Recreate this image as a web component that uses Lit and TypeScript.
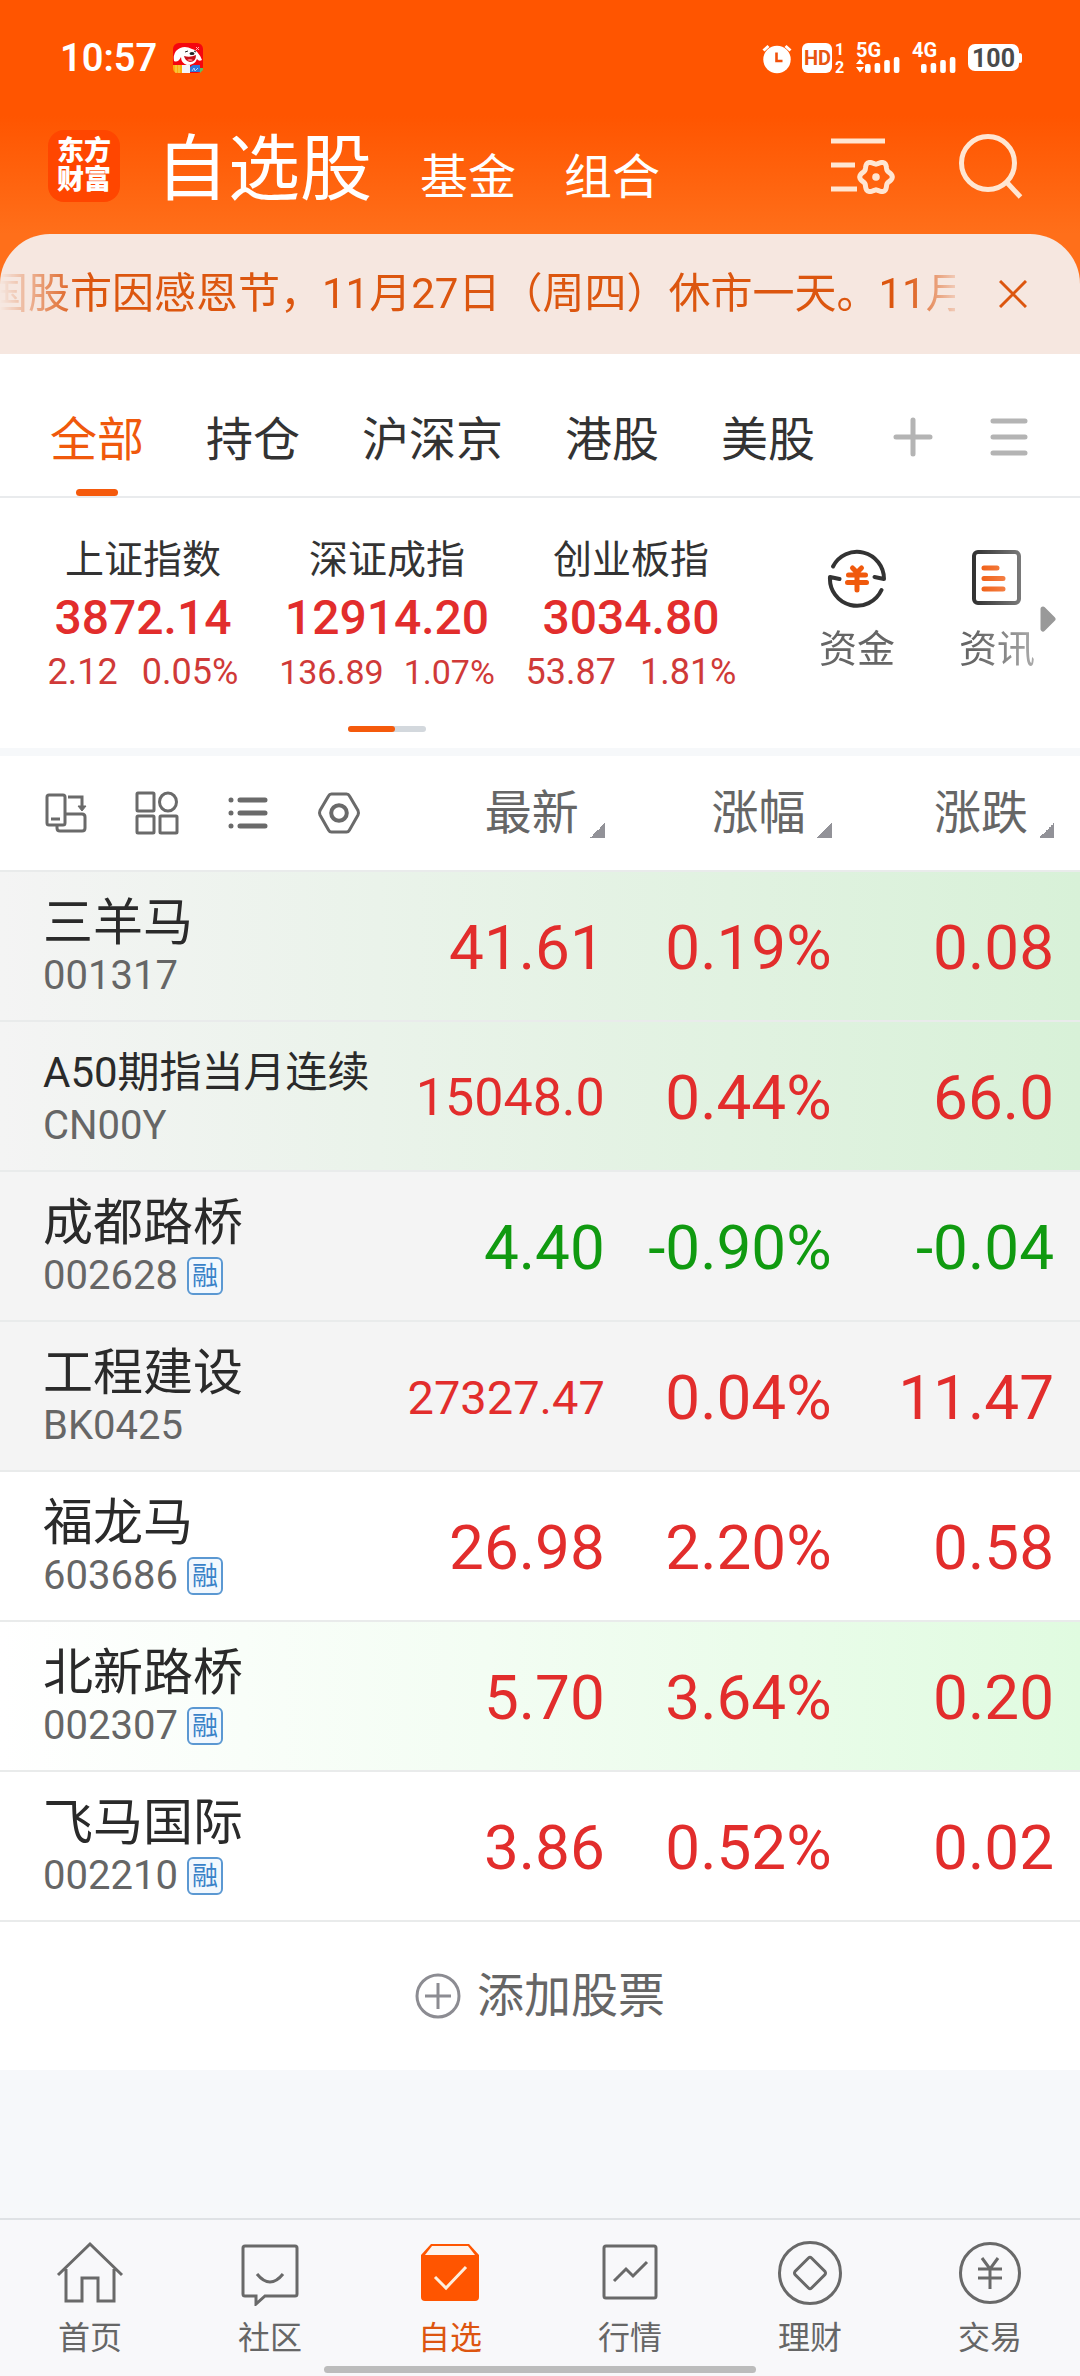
import { LitElement, html, svg, css, nothing } from "lit";
import { customElement, property, state } from "lit/decorators.js";
import { classMap } from "lit/directives/class-map.js";

type Tone = "up" | "down";
type Shade = "plain" | "grey" | "grey-flash" | "flash";

interface Stock {
  name: string;
  code: string;
  margin: boolean;
  price: string;
  percent: string;
  change: string;
  tone: Tone;
  shade: Shade;
}

const STOCKS: Stock[] = [
  { name: "三羊马", code: "001317", margin: false, price: "41.61", percent: "0.19%", change: "0.08", tone: "up", shade: "grey-flash" },
  { name: "A50期指当月连续", code: "CN00Y", margin: false, price: "15048.0", percent: "0.44%", change: "66.0", tone: "up", shade: "grey-flash" },
  { name: "成都路桥", code: "002628", margin: true, price: "4.40", percent: "-0.90%", change: "-0.04", tone: "down", shade: "grey" },
  { name: "工程建设", code: "BK0425", margin: false, price: "27327.47", percent: "0.04%", change: "11.47", tone: "up", shade: "grey" },
  { name: "福龙马", code: "603686", margin: true, price: "26.98", percent: "2.20%", change: "0.58", tone: "up", shade: "plain" },
  { name: "北新路桥", code: "002307", margin: true, price: "5.70", percent: "3.64%", change: "0.20", tone: "up", shade: "flash" },
  { name: "飞马国际", code: "002210", margin: true, price: "3.86", percent: "0.52%", change: "0.02", tone: "up", shade: "plain" },
];

const INDICES = [
  { name: "上证指数", value: "3872.14", change: "2.12", percent: "0.05%" },
  { name: "深证成指", value: "12914.20", change: "136.89", percent: "1.07%" },
  { name: "创业板指", value: "3034.80", change: "53.87", percent: "1.81%" },
];

/* Outline of a gear with six soft lobes. */
const gearPath = (cx: number, cy: number, radius: number, lobe: number): string => {
  const points: string[] = [];
  for (let i = 0; i < 72; i++) {
    const a = (i / 72) * Math.PI * 2;
    const r = radius + lobe * Math.cos(6 * a);
    points.push(`${(cx + r * Math.cos(a)).toFixed(2)} ${(cy + r * Math.sin(a)).toFixed(2)}`);
  }
  return `M${points.join("L")}Z`;
};

const signalBars = (tops: number[]) =>
  tops.map((top, i) => svg`<rect x=${9 + i * 9.6} y=${top} width="5.6" height=${31 - top} rx="2"></rect>`);

@customElement("status-bar")
export class StatusBar extends LitElement {
  static styles = css`
    :host {
      display: flex;
      align-items: center;
      height: 116px;
      padding: 0 58px 0 60px;
      color: #fff;
      font-family: Roboto, "Noto Sans", sans-serif;
    }
    .time {
      font-size: 38px;
      line-height: 48px;
      font-weight: 600;
      margin-right: 16px;
    }
    .tray {
      display: flex;
      align-items: center;
      gap: 10px;
      margin-left: auto;
    }
    svg {
      display: block;
      overflow: visible;
      fill: #fff;
    }
    text {
      font-weight: 700;
    }
    .s15 {
      font-size: 16px;
    }
    .s20 {
      font-size: 20px;
    }
    .s25 {
      font-size: 25px;
    }
    .dark {
      fill: #4a4a4a;
    }
    .orange {
      fill: #e85510;
    }
  `;

  render() {
    return html`
      <span class="time">10:57</span>
      <svg width="30" height="30" viewBox="0 0 30 30" aria-hidden="true">
        <rect width="30" height="30" rx="6" fill="#f5050f"></rect>
        <path d="M3 8Q10 1 19 6Q25 7 29 17Q26 19 24 16Q22 22 14 22Q8 20 8 14Q5 20 1 18Q0 12 3 8Z"></path>
        <path d="M11 13Q17 15 23 12Q23 19 17 19Q12 18 11 13Z" fill="#c81018"></path>
        <path d="M14 17Q17 15 20 17Q18 19 14 17Z" fill="#ff7a80"></path>
        <ellipse cx="19" cy="10.500" rx="2.500" ry="1.500" fill="#222"></ellipse>
        <path d="M12 9l3-1M21 8l2 1" stroke="#222" stroke-width="1"></path>
        <path d="M0 22H9V30H5Q0 30 0 25Z" fill="#f8b010"></path>
        <path d="M3 22v8M6 22v8" stroke="#fbd560" stroke-width="1"></path>
        <rect x="9" y="22" width="8" height="8" fill="#f4f4fa"></rect>
        <path d="M17 24L20 22H27V29H17Z" fill="#2f78d8"></path>
        <path d="M19 28l2-3 1 3 3-3" stroke="#a8d0ff" stroke-width="1" fill="none"></path>
        <path d="M27 25h3v2l-3 3Z" fill="#5fc060"></path>
        <path d="M23 4l3 3M26 4l-3 3" stroke="#ffb0b0" stroke-width="1"></path>
      </svg>
      <div class="tray">
        <svg width="30" height="32" viewBox="0 0 30 32" role="img" aria-label="闹钟">
          <circle cx="15" cy="17.500" r="13.700"></circle>
          <path d="M1.500 8.500L6.500 4M28.500 8.500L23.500 4" stroke="#fff" stroke-width="3"></path>
          <path d="M14.500 10.500V19H20.500" stroke="#f2500a" stroke-width="2.600" fill="none"></path>
        </svg>
        <svg width="44" height="32" viewBox="0 0 44 32">
          <rect y="1" width="30" height="30" rx="6"></rect>
          <text class="s20 orange" x="2" y="23">HD</text>
          <text class="s15" x="33" y="13">1</text>
          <text class="s15" x="33" y="31">2</text>
        </svg>
        <svg width="46" height="32" viewBox="0 0 46 32">
          <text class="s20" x="0" y="15">5G</text>
          <path d="M0 22H8L4 17ZM0 25H8L4 30.500Z"></path>
          ${signalBars([22, 21, 18, 15])}
        </svg>
        <svg width="46" height="32" viewBox="0 0 46 32">
          <text class="s20" x="0" y="15">4G</text>
          ${signalBars([22, 21, 18, 15])}
        </svg>
        <svg width="54" height="28" viewBox="0 0 54 28">
          <rect width="51" height="27" rx="7"></rect>
          <rect x="50" y="9" width="4" height="10" rx="2"></rect>
          <text class="s25 dark" x="4" y="23">100</text>
        </svg>
      </div>
    `;
  }
}

@customElement("app-header")
export class AppHeader extends LitElement {
  static styles = css`
    :host {
      display: block;
      color: #fff;
    }
    .bar {
      display: flex;
      align-items: center;
      height: 100px;
      padding: 0 57px 18px 48px;
    }
    .logo {
      display: grid;
      place-content: center;
      width: 72px;
      height: 72px;
      border-radius: 16px;
      background: #ff4600;
      font-size: 27px;
      line-height: 29px;
      font-weight: 800;
      text-align: center;
    }
    .sections {
      display: flex;
      align-items: baseline;
      gap: 48px;
      margin-left: 36px;
      padding-top: 16px;
    }
    .tools {
      display: flex;
      align-items: center;
      gap: 64px;
      margin-left: auto;
    }
    button {
      all: unset;
      display: block;
      cursor: pointer;
      font-size: 48px;
      line-height: 72px;
    }
    .current {
      font-size: 72px;
      line-height: 72px;
    }
    svg {
      display: block;
      fill: none;
      stroke: #ffe6d2;
      stroke-width: 5px;
    }
    .dot {
      fill: #ffe6d2;
      stroke: none;
    }
  `;

  render() {
    return html`
      <status-bar></status-bar>
      <div class="bar">
        <div class="logo"><span>东方</span><span>财富</span></div>
        <nav class="sections">
          <button class="current" aria-current="page">自选股</button>
          <button>基金</button>
          <button>组合</button>
        </nav>
        <div class="tools">
          <button aria-label="自选设置">
            <svg width="64" height="58" viewBox="0 0 64 58">
              <path d="M0 4H54M0 28H24M0 52H26"></path>
              <path d=${gearPath(45, 40, 14.6, 1.7)}></path>
              <circle class="dot" cx="45" cy="40" r="3.800"></circle>
            </svg>
          </button>
          <button aria-label="搜索">
            <svg width="64" height="66" viewBox="0 0 64 66">
              <circle cx="29" cy="30" r="26.500"></circle>
              <path d="M47.500 49L61.500 64"></path>
            </svg>
          </button>
        </div>
      </div>
    `;
  }
}

@customElement("notice-bar")
export class NoticeBar extends LitElement {
  static styles = css`
    :host {
      display: flex;
      align-items: center;
      height: 120px;
      padding-right: 53px;
      border-radius: 50px 50px 0 0;
      background: #f6e7e0;
      color: #dc560f;
    }
    .marquee {
      flex: 1;
      display: flex;
      overflow: hidden;
      white-space: nowrap;
      font-size: 42px;
      line-height: 60px;
      -webkit-mask-image: linear-gradient(to right, transparent, #000 80px, #000 calc(100% - 50px), rgba(0, 0, 0, 0.2));
      mask-image: linear-gradient(to right, transparent, #000 80px, #000 calc(100% - 50px), rgba(0, 0, 0, 0.2));
    }
    .message {
      margin-left: -14px;
    }
    button {
      all: unset;
      display: block;
      cursor: pointer;
      margin-left: 44px;
    }
    svg {
      display: block;
      stroke: #dc560f;
      stroke-width: 3px;
    }
  `;

  render() {
    return html`
      <div class="marquee">
        <span class="message">国股市因感恩节，11月27日（周四）休市一天。11月</span>
      </div>
      <button aria-label="关闭公告">
        <svg width="28" height="28" viewBox="0 0 28 28"><path d="M1 1L27 27M27 1L1 27"></path></svg>
      </button>
    `;
  }
}

@customElement("group-tabs")
export class GroupTabs extends LitElement {
  @state() private selected = "全部";

  static styles = css`
    :host {
      display: flex;
      align-items: stretch;
      height: 144px;
      padding: 0 52px 0 50px;
      background: #fff;
      border-bottom: 2px solid #e9ebed;
      color: #333;
      box-sizing: border-box;
    }
    .tabs {
      display: flex;
      gap: 62px;
    }
    button {
      all: unset;
      display: flex;
      flex-direction: column;
      align-items: center;
      cursor: pointer;
      font-size: 47px;
      line-height: 60px;
    }
    .tab {
      justify-content: space-between;
      padding-top: 56px;
    }
    .tab::after {
      content: "";
      width: 42px;
      height: 7px;
      border-radius: 4px;
    }
    .selected {
      color: #f0590c;
    }
    .selected::after {
      background: #f55a0c;
    }
    .tools {
      display: flex;
      align-items: center;
      gap: 57px;
      margin-left: auto;
      padding-top: 24px;
    }
    svg {
      display: block;
      stroke: #b4b4b4;
      stroke-width: 5px;
      stroke-linecap: round;
    }
  `;

  render() {
    return html`
      <div class="tabs" role="tablist">
        ${["全部", "持仓", "沪深京", "港股", "美股"].map(
          (label) => html`<button
            role="tab"
            aria-selected=${label === this.selected}
            class=${classMap({ tab: true, selected: label === this.selected })}
            @click=${() => (this.selected = label)}
          >${label}</button>`
        )}
      </div>
      <div class="tools">
        <button aria-label="新增分组">
          <svg width="40" height="40" viewBox="0 0 40 40"><path d="M3 20H37M20 3V37"></path></svg>
        </button>
        <button aria-label="分组管理">
          <svg width="38" height="40" viewBox="0 0 38 40"><path d="M3 4H35M3 20H35M3 36H35"></path></svg>
        </button>
      </div>
    `;
  }
}

@customElement("index-strip")
export class IndexStrip extends LitElement {
  static styles = css`
    :host {
      display: flex;
      flex-direction: column;
      background: #fff;
    }
    .content {
      display: flex;
      align-items: flex-start;
      padding: 34px 24px 0 21px;
    }
    .main {
      flex: 3;
    }
    .indices {
      display: grid;
      grid-template-columns: repeat(3, 1fr);
    }
    .index {
      display: flex;
      flex-direction: column;
      align-items: center;
      white-space: nowrap;
      color: #e22d2c;
    }
    .name {
      color: #333;
      font-size: 39px;
      line-height: 56px;
    }
    .value {
      font-size: 48px;
      line-height: 60px;
      font-weight: 500;
    }
    .moves {
      display: flex;
      gap: 24px;
      font-size: 36px;
      line-height: 48px;
      color: #d03a38;
    }
    .compact {
      gap: 20px;
      font-size: 34px;
    }
    .links {
      display: flex;
      align-items: center;
      justify-content: flex-end;
      width: 303px;
    }
    .faded {
      display: flex;
      gap: 64px;
      padding-top: 16px;
      -webkit-mask-image: linear-gradient(to right, #000 72%, rgba(0, 0, 0, 0.55));
      mask-image: linear-gradient(to right, #000 72%, rgba(0, 0, 0, 0.55));
    }
    button {
      all: unset;
      display: flex;
      flex-direction: column;
      align-items: center;
      gap: 13px;
      cursor: pointer;
      color: #666;
      font-size: 38px;
      line-height: 56px;
    }
    .next {
      margin: 28px 0 0 5px;
    }
    .pager {
      display: flex;
      width: 78px;
      height: 6px;
      margin: 30px auto 16px;
      border-radius: 3px;
      background: #d3d8dd;
    }
    .thumb {
      width: 47px;
      border-radius: 3px;
      background: #f55a0c;
    }
    svg {
      display: block;
    }
    .ink {
      fill: none;
      stroke: #333;
      stroke-width: 4px;
      stroke-linecap: round;
      stroke-linejoin: round;
    }
    .accent {
      fill: none;
      stroke: #f0590c;
      stroke-width: 4px;
      stroke-linecap: round;
    }
    .bold {
      stroke-width: 5px;
    }
  `;

  render() {
    return html`
      <div class="content">
        <div class="main">
          <div class="indices">
            ${INDICES.map(
              (item) => html`<div class="index">
                <span class="name">${item.name}</span>
                <span class="value">${item.value}</span>
                <span class=${classMap({ moves: true, compact: item.change.length > 5 })}>
                  <span>${item.change}</span><span>${item.percent}</span>
                </span>
              </div>`
            )}
          </div>
          <div class="pager"><span class="thumb"></span></div>
        </div>
        <div class="links">
          <div class="faded">
            <button>
              <svg width="60" height="60" viewBox="0 0 60 60">
                <path class="ink" d="M6 18.500A27 27 0 0 1 57 31L47.500 29"></path>
                <path class="ink" d="M54.500 42A27 27 0 0 1 3 29L12.500 31"></path>
                <path class="accent bold" d="M25.500 20L30 24.500L34.500 20M21.500 27H38.500M20.500 34.500H39.500M30 25V42"></path>
              </svg>
              资金
            </button>
            <button>
              <svg width="60" height="60" viewBox="0 0 60 60">
                <rect class="ink" x="7" y="4" width="45" height="51" rx="4"></rect>
                <path class="accent bold" d="M17 20H30M17 30.500H36M17 41H36"></path>
              </svg>
              资讯
            </button>
          </div>
          <svg class="next" width="16" height="26" viewBox="0 0 16 26">
            <path d="M3 3L13 13L3 23Z" fill="#999" stroke="#999" stroke-width="5" stroke-linejoin="round"></path>
          </svg>
        </div>
      </div>
    `;
  }
}

@customElement("stock-table")
export class StockTable extends LitElement {
  @property({ attribute: false }) stocks: Stock[] = [];

  static styles = css`
    :host {
      display: block;
      background: #fff;
    }
    table {
      width: 100%;
      border-collapse: collapse;
      table-layout: fixed;
    }
    .c-name {
      width: 36%;
    }
    .c-percent {
      width: 21%;
    }
    .c-change {
      width: 23%;
    }
    th,
    td {
      box-sizing: border-box;
      padding: 0;
      font-weight: 400;
      text-align: right;
      white-space: nowrap;
    }
    .head {
      height: 114px;
    }
    .row {
      height: 150px;
      box-shadow: inset 0 2px 0 #e9ebeb;
    }
    .toolbar {
      display: flex;
      gap: 47px;
      padding-left: 44px;
    }
    button {
      all: unset;
      cursor: pointer;
    }
    .sort {
      display: inline-flex;
      align-items: flex-end;
      gap: 11px;
      color: #666;
      font-size: 47px;
      line-height: 60px;
    }
    .sort::after {
      content: "";
      width: 15px;
      height: 15px;
      margin-bottom: 5px;
      background: linear-gradient(135deg, transparent 50%, #929298 50%);
    }
    th.last,
    td.last {
      padding-right: 26px;
    }
    .name-cell {
      padding-left: 43px;
      text-align: left;
      color: #2a2a2a;
    }
    .name {
      display: block;
      padding-top: 8px;
      font-size: 50px;
      line-height: 54px;
    }
    .name.tight {
      font-size: 42px;
    }
    .code {
      display: flex;
      align-items: center;
      gap: 9px;
      font-size: 40px;
      line-height: 52px;
      color: #666;
    }
    .badge {
      padding: 0 3px;
      border: 2px solid #5b98d2;
      border-radius: 6px;
      background: #f2f8fe;
      color: #3a82c8;
      font-size: 26px;
      line-height: 34px;
    }
    .figure {
      padding-top: 5px;
      font-size: 62px;
      line-height: 72px;
    }
    .figure.tight {
      font-size: 52px;
    }
    .figure.tighter {
      font-size: 47px;
    }
    .up {
      color: #e22d2c;
    }
    .down {
      color: #109a10;
    }
    .grey {
      background: #f4f4f4;
    }
    .grey-flash {
      background: linear-gradient(to right, #f4f4f4, #eaf3ea 35%, #d8f1d8);
    }
    .flash {
      background: linear-gradient(to right, #fff, #f3fdf3 45%, #e0fbe0);
    }
    .add {
      display: flex;
      align-items: center;
      justify-content: center;
      gap: 16px;
      width: 100%;
      height: 150px;
      border-top: 2px solid #e9ebeb;
      box-sizing: border-box;
      color: #666;
      font-size: 47px;
      line-height: 60px;
    }
    svg {
      display: block;
      fill: none;
      stroke: #6a6a6a;
      stroke-width: 3px;
    }
    .thick {
      stroke-width: 5px;
      stroke-linecap: round;
    }
    .soft {
      stroke: #8c8c92;
    }
  `;

  private toolbar() {
    return html`<div class="toolbar">
      <button aria-label="横屏">
        <svg width="44" height="44" viewBox="0 0 44 44">
          <rect x="3" y="4" width="18" height="30" rx="2"></rect>
          <path d="M7 28H16M21 23H38Q41 23 41 26V37Q41 40 38 40H16Q13 40 13 37V34"></path>
          <path d="M24 6H38V16"></path>
          <path d="M34 15H42L38 20Z" fill="#6a6a6a" stroke-width="1"></path>
        </svg>
      </button>
      <button aria-label="宫格">
        <svg width="44" height="44" viewBox="0 0 44 44">
          <rect x="2" y="2" width="17" height="18" rx="1"></rect>
          <ellipse cx="33" cy="11" rx="8.500" ry="9"></ellipse>
          <rect x="2" y="25" width="17" height="17" rx="1"></rect>
          <rect x="25" y="25" width="17" height="17" rx="1"></rect>
        </svg>
      </button>
      <button aria-label="列表">
        <svg width="44" height="44" viewBox="0 0 44 44">
          <path class="thick" d="M5 9V9.100M5 22V22.100M5 35V35.100M14 9H39M14 22H39M14 35H39"></path>
        </svg>
      </button>
      <button aria-label="设置">
        <svg width="44" height="44" viewBox="0 0 44 44">
          <path d="M14.500 3H29.500Q31.500 3 32.500 5L41 19.500Q42 22 41 24L32.500 39Q31.500 41 29.500 41H14.500Q12.500 41 11.500 39L3 24Q2 22 3 19.500L11.500 5Q12.500 3 14.500 3Z"></path>
          <circle cx="22" cy="22" r="7.800" stroke-width="4"></circle>
        </svg>
      </button>
    </div>`;
  }

  render() {
    return html`
      <table>
        <thead>
          <tr class="head">
            <th class="c-name" scope="col">${this.toolbar()}</th>
            <th scope="col"><button class="sort">最新</button></th>
            <th class="c-percent" scope="col"><button class="sort">涨幅</button></th>
            <th class="c-change last" scope="col"><button class="sort">涨跌</button></th>
          </tr>
        </thead>
        <tbody>
          ${this.stocks.map(
            (s) => html`<tr class="row ${s.shade}">
              <td class="name-cell">
                <span class=${classMap({ name: true, tight: s.name.length > 6 })}>${s.name}</span>
                <span class="code">${s.code}${s.margin ? html`<span class="badge">融</span>` : nothing}</span>
              </td>
              <td class=${classMap({ figure: true, [s.tone]: true, tight: s.price.length === 7, tighter: s.price.length > 7 })}>${s.price}</td>
              <td class="figure ${s.tone}">${s.percent}</td>
              <td class="figure last ${s.tone}">${s.change}</td>
            </tr>`
          )}
        </tbody>
      </table>
      <button class="add">
        <svg class="soft" width="46" height="46" viewBox="0 0 46 46">
          <circle cx="23" cy="23" r="21"></circle>
          <path d="M10 23H36M23 10V36"></path>
        </svg>
        添加股票
      </button>
    `;
  }
}

const NAV_ITEMS = [
  {
    label: "首页",
    art: svg`<path d="M3 34L35 3L67 34M11 28V60H27V37H43V60H59V28"></path>`,
  },
  {
    label: "社区",
    art: svg`<path d="M10 5H60Q62 5 62 7V53Q62 55 60 55H30L21 63V55H10Q8 55 8 53V7Q8 5 10 5Z"></path><path d="M22 33Q35 49 48 33"></path>`,
  },
  {
    label: "自选",
    art: svg`<path class="solid" d="M6 14L16 3H54L64 14V56Q64 60 60 60H10Q6 60 6 56Z"></path><path class="flap" d="M10 14L17 5H53L60 14Z"></path><path class="tick" d="M20 36L31 47L51 26"></path>`,
  },
  {
    label: "行情",
    art: svg`<rect x="9" y="5" width="52" height="52" rx="2"></rect><path d="M19 40L31 28L38 35L52 21"></path>`,
  },
  {
    label: "理财",
    art: svg`<circle cx="35" cy="32" r="30.500"></circle><path d="M33.500 17Q35 15.500 36.500 17L50 30.500Q51 32 50 33.500L36.500 47Q35 48.500 33.500 47L20 33.500Q19 32 20 30.500Z"></path>`,
  },
  {
    label: "交易",
    art: svg`<circle cx="35" cy="32" r="29.500"></circle><path d="M27 17L35 28L43 17M23 28H47M23 37H47M35 28V48"></path>`,
  },
];

@customElement("bottom-nav")
export class BottomNav extends LitElement {
  @state() private current = "自选";

  static styles = css`
    :host {
      display: block;
      padding-bottom: 3px;
      border-top: 2px solid #dfe2e5;
      background: #f8f8fa;
    }
    nav {
      display: grid;
      grid-template-columns: repeat(6, 1fr);
      padding-top: 21px;
    }
    a {
      display: flex;
      flex-direction: column;
      align-items: center;
      gap: 10px;
      color: #666;
      text-decoration: none;
      font-size: 32px;
      line-height: 44px;
    }
    .current {
      color: #dd5510;
    }
    svg {
      display: block;
      fill: none;
      stroke: #696969;
      stroke-width: 3px;
    }
    .solid {
      fill: #ff5500;
      stroke: none;
    }
    .flap {
      fill: #fdf3ec;
      stroke: none;
    }
    .tick {
      stroke: #fdeedd;
    }
    .home-bar {
      width: 40%;
      height: 7px;
      margin: 6px auto 0;
      border-radius: 4px;
      background: #bcbcbc;
    }
  `;

  render() {
    return html`
      <nav>
        ${NAV_ITEMS.map(
          (item) => html`<a href="#" class=${classMap({ current: item.label === this.current })} @click=${(e: Event) => {
            e.preventDefault();
            this.current = item.label;
          }}>
            <svg width="70" height="65" viewBox="0 0 70 65">${item.art}</svg>
            ${item.label}
          </a>`
        )}
      </nav>
      <div class="home-bar"></div>
    `;
  }
}

@customElement("app-root")
export class AppRoot extends LitElement {
  static styles = css`
    :host {
      display: flex;
      flex-direction: column;
      min-height: 100vh;
      background: #f6f8fa;
      font-family: Roboto, "Noto Sans CJK SC", "Noto Sans", sans-serif;
    }
    .top {
      background: linear-gradient(to bottom, #ff5500 116px, #ff6f1a 234px);
    }
    .watch {
      margin-top: 8px;
    }
    .space {
      flex: 1;
    }
  `;

  render() {
    return html`
      <div class="top">
        <app-header></app-header>
        <notice-bar></notice-bar>
      </div>
      <group-tabs></group-tabs>
      <index-strip></index-strip>
      <stock-table class="watch" .stocks=${STOCKS}></stock-table>
      <div class="space"></div>
      <bottom-nav></bottom-nav>
    `;
  }
}
